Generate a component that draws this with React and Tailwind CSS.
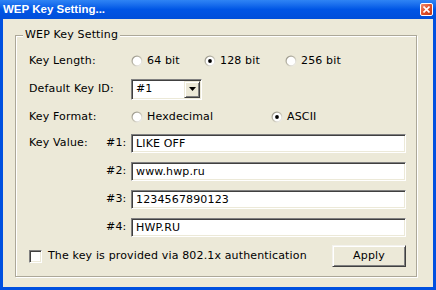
import { useId } from 'react';

const font = { fontFamily: '"DejaVu Sans", Verdana, sans-serif' };

function Radio({ checked }) {
  const id = useId();
  return (
    <svg width="12" height="12" viewBox="0 0 12 12" className="shrink-0">
      <defs>
        <linearGradient id={id} x1="0" y1="0" x2="1" y2="1">
          <stop offset="0" stopColor="#8a877a" />
          <stop offset="0.55" stopColor="#c9c6b8" />
          <stop offset="1" stopColor="#ffffff" />
        </linearGradient>
      </defs>
      <circle cx="6" cy="6" r="5.5" fill={`url(#${id})`} />
      <circle cx="6" cy="6" r="4.3" fill="#ffffff" />
      {checked && <circle cx="6" cy="6" r="1.9" fill="#000" />}
    </svg>
  );
}

function Option({ checked, label, w }) {
  return (
    <div className={`flex items-center gap-[4px] ${w}`}>
      <Radio checked={checked} />
      <span>{label}</span>
    </div>
  );
}

const sunken =
  'border border-t-[#808080] border-l-[#808080] border-b-white border-r-white shadow-[inset_1px_1px_0_#404040,inset_-1px_-1px_0_#ece9d8] bg-white';

function Field({ value }) {
  return (
    <div className={`w-[275px] h-[19px] flex items-center pl-[4px] ${sunken}`}>
      <span className="leading-none">{value}</span>
    </div>
  );
}

export default function App() {
  const keys = ['LIKE OFF', 'www.hwp.ru', '1234567890123', 'HWP.RU'];
  return (
    <div className="w-[436px] h-[290px] bg-[#0050e0] flex flex-col overflow-hidden text-[11px] tracking-[0.15px] text-black" style={font}>
      <div className="h-[19px] shrink-0 flex items-center justify-between pl-[3px] pr-[3px] bg-gradient-to-b from-[#2f84f4] via-[#0055e5] to-[#004fda]">
        <span
          className="text-white font-bold text-[11.5px] tracking-normal pt-[1px]"
          style={{ fontFamily: '"Liberation Sans", Arial, sans-serif' }}
        >
          WEP Key Setting...
        </span>
        <div className="w-[13px] h-[13px] rounded-[2px] border border-white bg-gradient-to-br from-[#f08a6a] via-[#e0502a] to-[#c0381a] flex items-center justify-center">
          <svg width="7" height="7" viewBox="0 0 7 7">
            <path d="M0.5 0.5 L6.5 6.5 M6.5 0.5 L0.5 6.5" stroke="#fff" strokeWidth="1.6" />
          </svg>
        </div>
      </div>

      <div className="mx-[3px] mb-[3px] flex-1 bg-[#ece9d8] pt-[16px] pl-[12px]">
        <div className="relative w-[402px] h-[242px] border border-[#aca899] shadow-[1px_1px_0_#fff,inset_1px_1px_0_#fff] pt-[11px] pl-[13px]">
          <span className="absolute left-[7px] top-[-8px] px-[2px] bg-[#ece9d8] leading-[13px]">WEP Key Setting</span>

          <div className="h-[28px] flex items-center">
            <span className="w-[102px]">Key Length:</span>
            <Option label="64 bit" w="w-[73px]" />
            <Option label="128 bit" checked w="w-[81px]" />
            <Option label="256 bit" />
          </div>

          <div className="h-[28px] flex items-center">
            <span className="w-[102px]">Default Key ID:</span>
            <div className={`w-[71px] h-[21px] flex items-center justify-between pl-[4px] pr-[1px] ${sunken}`}>
              <span>#1</span>
              <div className="w-[16px] h-[17px] bg-[#ece9d8] border border-t-[#ece9d8] border-l-[#ece9d8] border-b-[#404040] border-r-[#404040] shadow-[inset_1px_1px_0_#fff,inset_-1px_-1px_0_#808080] flex items-center justify-center">
                <svg width="7" height="4" viewBox="0 0 7 4">
                  <path d="M0 0 H7 L3.5 4 Z" fill="#000" />
                </svg>
              </div>
            </div>
          </div>

          <div className="h-[28px] flex items-center">
            <span className="w-[102px]">Key Format:</span>
            <Option label="Hexdecimal" w="w-[140px]" />
            <Option label="ASCII" checked />
          </div>

          <div className="pt-[3px] flex flex-col gap-[9px]">
            {keys.map((k, i) => (
              <div key={i} className="flex items-center">
                <span className="w-[77px]">{i === 0 ? 'Key Value:' : ''}</span>
                <span className="w-[25px]">#{i + 1}:</span>
                <Field value={k} />
              </div>
            ))}
          </div>

          <div className="mt-[8px] w-[377px] flex items-center justify-between">
            <div className="flex items-center gap-[6px]">
              <div className={`w-[13px] h-[13px] ${sunken}`} />
              <span>The key is provided via 802.1x authentication</span>
            </div>
            <div className="w-[74px] h-[22px] bg-[#ece9d8] border border-t-[#f4f3ee] border-l-[#f4f3ee] border-b-[#404040] border-r-[#404040] shadow-[inset_1px_1px_0_#fff,inset_-1px_-1px_0_#808080] flex items-center justify-center">
              Apply
            </div>
          </div>
        </div>
      </div>
    </div>
  );
}
